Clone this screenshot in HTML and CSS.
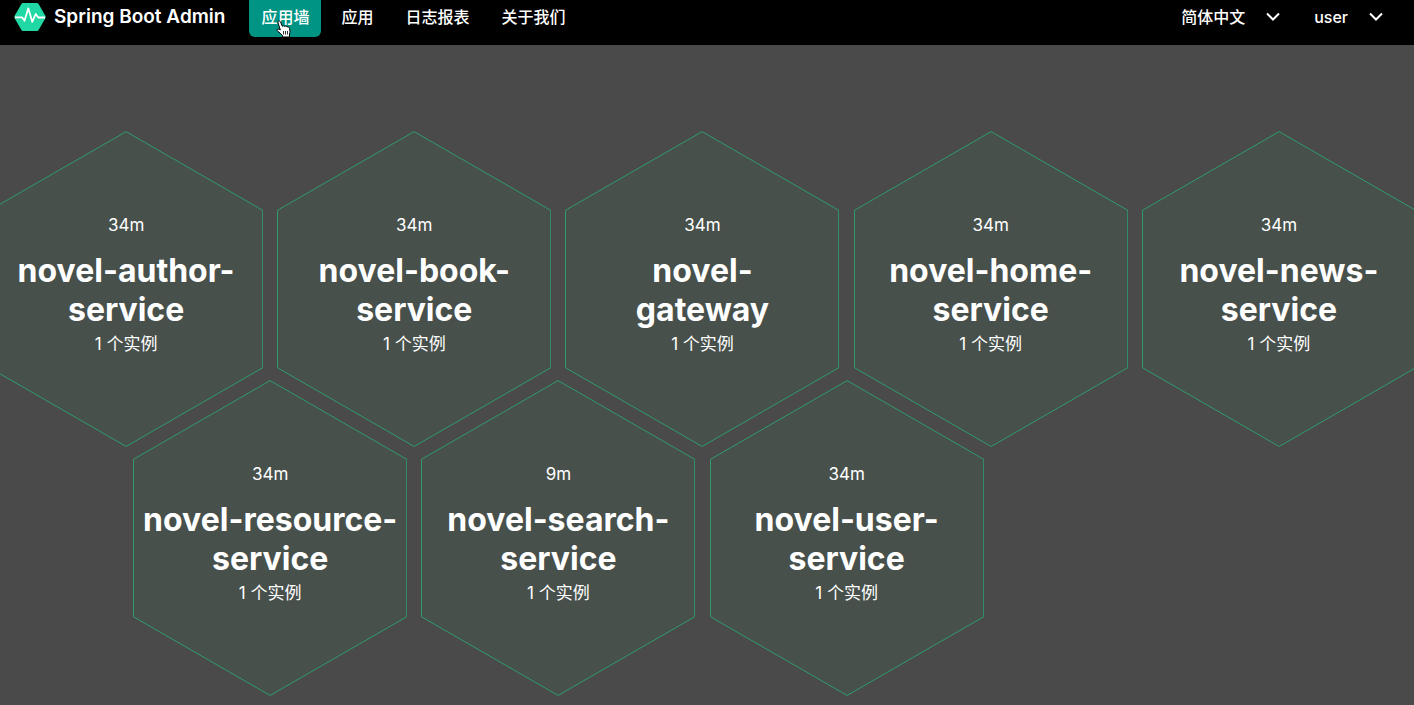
FILE: index.html
```html
<!DOCTYPE html>
<html lang="zh-CN">
<head>
<meta charset="utf-8">
<meta name="viewport" content="width=device-width, initial-scale=1">
<title>Spring Boot Admin</title>
<link rel="stylesheet" href="styles.css">
</head>
<body>
<svg class="defs" aria-hidden="true">
  <symbol id="hex" viewBox="0 0 275 317" preserveAspectRatio="none">
    <path class="hex-shape" d="M137.500 .6 274.500 79.500V237.500L137.500 316.400.5 237.500V79.500Z"/>
  </symbol>
</svg>
<header class="bar">
  <a class="brand" href="#">
    <svg class="logo" viewBox="0 0 32 30" aria-hidden="true">
      <path d="M9 1H23Q24 1 24.600 2L31.500 14Q32 15 31.500 16L24.600 28Q24 29 23 29H9Q8 29 7.400 28L.5 16Q0 15 .5 14L7.400 2Q8 1 9 1Z" fill="#1fd8a4"/>
      <path d="M1 15.300H8L10.500 18.800 14.300 6.300 18.200 19.800 21.700 12 24.200 15.500H31" fill="none" stroke="#fff" stroke-width="1.800" stroke-linejoin="round"/>
    </svg>
    <span>Spring Boot Admin</span>
  </a>
  <nav class="nav">
    <a class="item active" href="#wall">应用墙
      <svg class="pointer" viewBox="0 0 16 18" aria-hidden="true">
        <path d="M2 2.500C1.500 1 3.800.2 4.500 1.800L6.300 6.300C7 5.400 8.200 5.700 8.600 6.500 9.500 5.700 10.700 6.100 11 7 12.200 6.500 13.200 7.200 13.500 8.500 14 10.500 14.300 12 13.500 14V17H6.500V15.500C5 14 3.500 12.300 1.500 11 .2 10 1.500 8.600 3 9.300L4.300 10Z" fill="#fff" stroke="#000" stroke-width="1"/>
        <path d="M7.500 11V14.500M9.500 11V14.500M11.500 11V14.500" stroke="#000" stroke-width=".8"/>
      </svg>
    </a>
    <a class="item" href="#apps">应用</a>
    <a class="item" href="#journal">日志报表</a>
    <a class="item" href="#about">关于我们</a>
  </nav>
  <div class="menus">
    <button class="menu" type="button">简体中文
      <svg class="chevron" viewBox="0 0 14 10" aria-hidden="true"><path d="M1 1.500 7 7.500 13 1.500"/></svg>
    </button>
    <button class="menu" type="button">user
      <svg class="chevron" viewBox="0 0 14 10" aria-hidden="true"><path d="M1 1.500 7 7.500 13 1.500"/></svg>
    </button>
  </div>
</header>
<main class="wall">
  <a class="cell" href="#author"><svg class="hex"><use href="#hex"/></svg><div class="info"><span class="meta">34m</span><h1 class="name">novel-author-<br>service</h1><span class="meta">1 个实例</span></div></a>
  <a class="cell" href="#book"><svg class="hex"><use href="#hex"/></svg><div class="info"><span class="meta">34m</span><h1 class="name">novel-book-<br>service</h1><span class="meta">1 个实例</span></div></a>
  <a class="cell" href="#gateway"><svg class="hex"><use href="#hex"/></svg><div class="info"><span class="meta">34m</span><h1 class="name">novel-<br>gateway</h1><span class="meta">1 个实例</span></div></a>
  <a class="cell" href="#home"><svg class="hex"><use href="#hex"/></svg><div class="info"><span class="meta">34m</span><h1 class="name">novel-home-<br>service</h1><span class="meta">1 个实例</span></div></a>
  <a class="cell" href="#news"><svg class="hex"><use href="#hex"/></svg><div class="info"><span class="meta">34m</span><h1 class="name">novel-news-<br>service</h1><span class="meta">1 个实例</span></div></a>
  <a class="cell shifted" href="#resource"><svg class="hex"><use href="#hex"/></svg><div class="info"><span class="meta">34m</span><h1 class="name">novel-resource-<br>service</h1><span class="meta">1 个实例</span></div></a>
  <a class="cell" href="#search"><svg class="hex"><use href="#hex"/></svg><div class="info"><span class="meta">9m</span><h1 class="name">novel-search-<br>service</h1><span class="meta">1 个实例</span></div></a>
  <a class="cell" href="#user"><svg class="hex"><use href="#hex"/></svg><div class="info"><span class="meta">34m</span><h1 class="name">novel-user-<br>service</h1><span class="meta">1 个实例</span></div></a>
</main>
</body>
</html>
```
FILE: styles.css
```css
* {
  box-sizing: border-box;
}

body {
  margin: 0;
  min-height: 100vh;
  overflow: hidden;
  background: #4a4a4a;
  color: #fff;
  font: 16px/24px Inter, "Noto Sans CJK SC", sans-serif;
}

a {
  color: inherit;
  text-decoration: none;
}

.defs {
  display: block;
  width: 0;
  height: 0;
}

.bar {
  display: flex;
  align-items: flex-start;
  padding: 0 31px 8px 14px;
  background: #000;
  font-weight: 500;
  line-height: 34px;
}

.brand {
  display: flex;
  align-items: center;
  gap: 8px;
  margin-right: 24px;
  font-size: 19px;
  font-weight: 600;
  white-space: nowrap;
}

.logo {
  width: 32px;
  height: 30px;
}

.nav {
  display: flex;
  gap: 8px;
}

.item {
  position: relative;
  padding: 0 12px 3px;
  border-radius: 0 0 6px 6px;
  white-space: nowrap;
}

.active {
  background: #009485;
}

.pointer {
  position: absolute;
  left: 27px;
  top: 20px;
  width: 16px;
  height: 18px;
}

.menus {
  display: flex;
  gap: 34px;
  margin-left: auto;
}

.menu {
  display: flex;
  align-items: center;
  gap: 21px;
  padding: 0;
  border: 0;
  background: none;
  color: inherit;
  font: inherit;
  white-space: nowrap;
}

.chevron {
  width: 14px;
  height: 10px;
  fill: none;
  stroke: #fff;
  stroke-width: 2;
}

.wall {
  display: grid;
  grid-template-columns: repeat(10, minmax(0, 1fr));
  margin: 0 -9px 0 -18px;
  padding-top: 86px;
}

.cell {
  display: grid;
  grid-column: span 2;
  grid-template-columns: minmax(0, 1fr);
  margin-bottom: -67px;
  padding: 0 7px;
  pointer-events: none;
}

.shifted {
  grid-column: 2 / span 2;
}

.hex {
  grid-area: 1 / 1;
  display: block;
  width: 100%;
  aspect-ratio: 275 / 317;
}

.hex-shape {
  fill: #47504b;
  stroke: #2f9c6e;
  stroke-width: 1;
  pointer-events: auto;
}

.info {
  grid-area: 1 / 1;
  display: flex;
  flex-direction: column;
  align-items: center;
  justify-content: center;
  padding-bottom: 9px;
  text-align: center;
}

.meta {
  font-size: 17px;
  line-height: 26px;
}

.name {
  margin: 13px 0 2px;
  font-size: 32px;
  font-weight: 700;
  line-height: 39px;
  white-space: nowrap;
}
```
